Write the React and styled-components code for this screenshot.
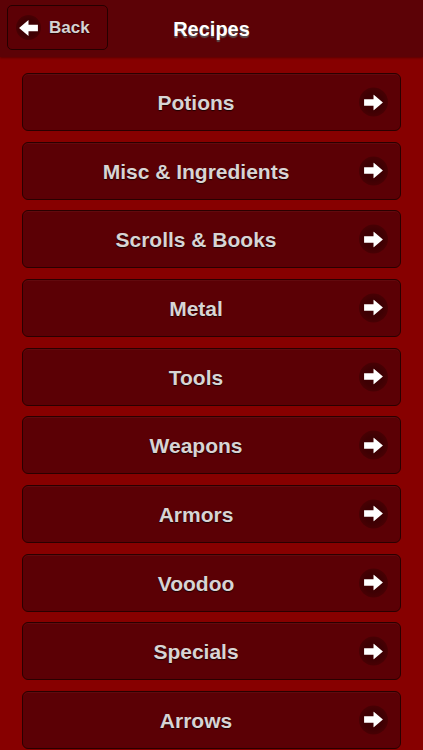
import React from "react";
import styled, { createGlobalStyle } from "styled-components";

const GlobalStyle = createGlobalStyle`
  html, body {
    margin: 0;
    padding: 0;
    background-color: #870000;
  }
  * {
    box-sizing: border-box;
  }
`;

const categories = [
  "Potions",
  "Misc & Ingredients",
  "Scrolls & Books",
  "Metal",
  "Tools",
  "Weapons",
  "Armors",
  "Voodoo",
  "Specials",
  "Arrows",
];

// White arrow drawn in svg, pointing left or right
const Arrow = ({ left }) => (
  <svg width="19" height="16" viewBox="0 0 20 17">
    <path
      d="M0 5 H10 V0 L20 8.5 L10 17 V12 H0 Z"
      fill="#ffffff"
      transform={left ? "translate(20 0) scale(-1 1)" : undefined}
    />
  </svg>
);

const App = () => {
  return (
    <Page>
      <GlobalStyle />
      <Header>
        <BackBtn>
          <IconCircle $small>
            <Arrow left />
          </IconCircle>
          <BackLabel>Back</BackLabel>
        </BackBtn>
        <Title>Recipes</Title>
      </Header>
      <List>
        {categories.map((c) => (
          <Row key={c}>
            <RowLabel>{c}</RowLabel>
            <RowIcon>
              <Arrow />
            </RowIcon>
          </Row>
        ))}
      </List>
    </Page>
  );
};

const Page = styled.div`
  width: 423px;
  height: 750px;
  overflow: hidden;
  background-color: #870000;
  font-family: "Liberation Sans", Arial, sans-serif;
`;

const Header = styled.div`
  position: relative;
  display: flex;
  align-items: center;
  justify-content: center;
  height: 57px;
  padding-top: 2px;
  background-color: #5c0206;
  box-shadow: 0 1px 2px rgba(0, 0, 0, 0.35);
`;

const BackBtn = styled.div`
  position: absolute;
  left: 7px;
  top: 5px;
  width: 101px;
  height: 45px;
  display: flex;
  align-items: center;
  padding-left: 8px;
  gap: 8px;
  border: 1.5px solid #260000;
  border-radius: 5px;
  background-color: #5c0005;
`;

const BackLabel = styled.span`
  color: #d6d2d2;
  font-size: 17px;
  font-weight: bold;
  text-shadow: 0 1px 1px rgba(0, 0, 0, 0.6);
`;

const Title = styled.h1`
  margin: 0;
  color: #ffffff;
  font-size: 20px;
  font-weight: bold;
  text-shadow: 0 2px 1px rgba(90, 90, 90, 0.9);
`;

const List = styled.div`
  display: flex;
  flex-direction: column;
  gap: 10.67px;
  padding: 16px 22px 0 22px;
`;

const Row = styled.div`
  position: relative;
  flex-shrink: 0;
  display: flex;
  align-items: center;
  justify-content: center;
  height: 58px;
  padding: 2px 31px 0 0;
  border: 1.5px solid #2a0000;
  border-radius: 6px;
  background-color: #5b0005;
  box-shadow: inset 0 1px 0 rgba(255, 255, 255, 0.04);
`;

const RowLabel = styled.span`
  color: #d8d4d4;
  font-size: 21px;
  font-weight: bold;
  text-shadow: 0 1px 1px rgba(0, 0, 0, 0.7);
`;

const IconCircle = styled.div`
  display: flex;
  align-items: center;
  justify-content: center;
  width: ${(p) => (p.$small ? "25px" : "29px")};
  height: ${(p) => (p.$small ? "25px" : "29px")};
  border-radius: 50%;
  background: radial-gradient(circle, #3e0003 45%, #480003 70%, rgba(91, 0, 5, 0) 100%);
`;

const RowIcon = styled(IconCircle)`
  position: absolute;
  right: 12px;
  top: 50%;
  transform: translateY(-50%);
`;

export default App;
